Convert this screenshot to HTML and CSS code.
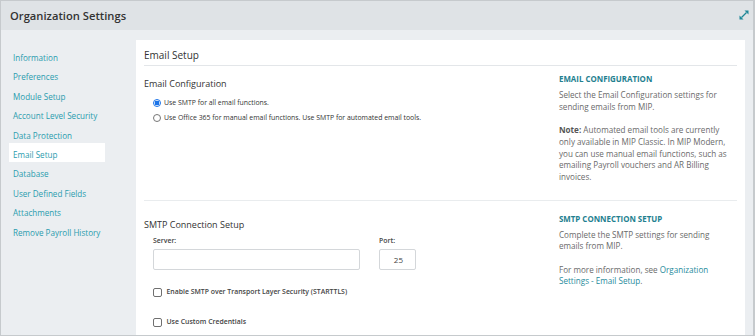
FILE: index.html
```html
<!DOCTYPE html>
<html lang="en">
<head>
    <meta charset="UTF-8">
    <meta name="viewport" content="width=device-width, initial-scale=1.0">
    <title>Organization Settings</title>
    <link rel="stylesheet" href="styles.css">
</head>
<body>
    <div class="panel">
        <div class="panel-header">
            <span class="panel-title">Organization Settings</span>
            <!-- Expand icon -->
            <svg class="expand-icon" width="10" height="10" viewBox="0 0 10 10">
                <line x1="2.5" y1="7.5" x2="7.5" y2="2.5" stroke="#1e8797" stroke-width="1.2"/>
                <polygon points="5.5,0.5 9.5,0.5 9.5,4.5" fill="#1e8797"/>
                <polygon points="0.5,5.5 0.5,9.5 4.5,9.5" fill="#1e8797"/>
            </svg>
        </div>

        <div class="panel-body">
            <ul class="side-nav">
                <li><a href="#">Information</a></li>
                <li><a href="#">Preferences</a></li>
                <li><a href="#">Module Setup</a></li>
                <li><a href="#">Account Level Security</a></li>
                <li><a href="#">Data Protection</a></li>
                <li class="active"><a href="#">Email Setup</a></li>
                <li><a href="#">Database</a></li>
                <li><a href="#">User Defined Fields</a></li>
                <li><a href="#">Attachments</a></li>
                <li><a href="#">Remove Payroll History</a></li>
            </ul>

            <div class="card">
                <div class="card-title">Email Setup</div>

                <div class="section section-config">
                    <div class="section-main">
                        <div class="section-heading">Email Configuration</div>
                        <label class="radio-row">
                            <span class="radio checked"></span>
                            Use SMTP for all email functions.
                        </label>
                        <label class="radio-row">
                            <span class="radio"></span>
                            Use Office 365 for manual email functions. Use SMTP for automated email tools.
                        </label>
                    </div>
                    <div class="section-help">
                        <div class="help-heading">EMAIL CONFIGURATION</div>
                        <p>Select the Email Configuration settings for sending emails from MIP.</p>
                        <p class="spaced"><strong>Note:</strong> Automated email tools are currently only available in MIP Classic. In MIP Modern, you can use manual email functions, such as emailing Payroll vouchers and AR Billing invoices.</p>
                    </div>
                </div>

                <div class="section section-smtp">
                    <div class="section-main">
                        <div class="section-heading">SMTP Connection Setup</div>
                        <div class="field-row">
                            <div class="field field-server">
                                <div class="field-label">Server:</div>
                                <div class="text-input"></div>
                            </div>
                            <div class="field field-port">
                                <div class="field-label">Port:</div>
                                <div class="text-input port-input">25</div>
                            </div>
                        </div>
                        <label class="check-row first">
                            <span class="checkbox"></span>
                            Enable SMTP over Transport Layer Security (STARTTLS)
                        </label>
                        <label class="check-row">
                            <span class="checkbox"></span>
                            Use Custom Credentials
                        </label>
                    </div>
                    <div class="section-help">
                        <div class="help-heading">SMTP CONNECTION SETUP</div>
                        <p>Complete the SMTP settings for sending emails from MIP.</p>
                        <p class="spaced">For more information, see <a href="#">Organization Settings - Email Setup</a>.</p>
                    </div>
                </div>
            </div>
        </div>
    </div>
</body>
</html>
```

FILE: styles.css
```css
* {
    box-sizing: border-box;
}

html, body {
    margin: 0;
    padding: 0;
}

body {
    font-family: 'Open Sans', 'Liberation Sans', sans-serif;
    background-color: #ffffff;
    color: #333;
}

.panel {
    width: 755px;
    height: 336px;
    border: 1px solid #c6cacd;
    border-right-width: 2px;
    overflow: hidden;
    background-color: #ebeef1;
}

.panel-header {
    height: 29px;
    background-color: #dfe3e6;
    display: flex;
    align-items: center;
    justify-content: space-between;
    padding: 0 4px 0 9px;
}

.panel-title {
    font-size: 11.2px;
    font-weight: 600;
    color: #333;
}

.expand-icon {
    margin-top: -1px;
}

.panel-body {
    display: flex;
    align-items: flex-start;
    padding: 10px 8px 0 0;
    height: 306px;
}

/* Left navigation */
.side-nav {
    list-style: none;
    margin: 0;
    padding: 6px 0 0 8px;
    width: 135px;
    flex-shrink: 0;
}

.side-nav li {
    width: 96px;
    height: 19.4px;
    line-height: 19.4px;
    padding-left: 4px;
}

.side-nav li.active {
    background-color: #ffffff;
}

.side-nav a {
    font-size: 8.1px;
    color: #2a9cae;
    text-decoration: none;
}

/* Main card */
.card {
    flex: 1;
    background-color: #ffffff;
    padding: 0 8px;
    min-height: 310px;
}

.card-title {
    font-size: 10px;
    line-height: 16px;
    padding: 7px 0 2px;
    border-bottom: 1px solid #e3e6e9;
    color: #333;
}

.section {
    display: grid;
    grid-template-columns: 415px 1fr;
}

.section-config {
    padding: 7px 0 17px;
    border-bottom: 1px solid #e9ecee;
}

.section-smtp {
    padding-top: 12px;
}

.section-heading {
    font-size: 9px;
    line-height: 14px;
    margin-top: 4px;
    color: #333;
}

.section-smtp .section-heading {
    margin-top: 5px;
}

.radio-row {
    display: flex;
    align-items: center;
    height: 15px;
    padding-left: 9px;
    font-size: 6.9px;
    color: #333;
}

.section-config .radio-row:first-of-type {
    margin-top: 4px;
}

.radio {
    width: 8px;
    height: 8px;
    border-radius: 50%;
    border: 1px solid #767676;
    margin-right: 3px;
    flex-shrink: 0;
}

.radio.checked {
    border-color: #1a73e8;
    background: radial-gradient(circle, #1a73e8 0 2.2px, #ffffff 2.6px);
}

/* Help column */
.section-help {
    max-width: 172px;
}

.help-heading {
    font-size: 7.9px;
    font-weight: 700;
    line-height: 12px;
    color: #23808f;
}

.section-help p {
    margin: 4px 0 0;
    font-size: 8.1px;
    line-height: 11.7px;
    color: #6a6a6a;
}

.section-help p.spaced {
    margin-top: 11.7px;
}

.section-help strong {
    color: #555;
}

.section-help a {
    color: #1f8b9c;
    text-decoration: none;
}

/* SMTP fields */
.field-row {
    display: flex;
    gap: 19px;
    padding-left: 9px;
    margin-top: 4px;
}

.field-label {
    font-size: 6.9px;
    font-weight: 600;
    line-height: 10px;
    color: #444;
    margin-bottom: 3px;
}

.field-server {
    width: 207px;
}

.field-port {
    width: 37px;
}

.text-input {
    height: 21px;
    border: 1px solid #d4d7da;
    border-radius: 2px;
    font-size: 8px;
    color: #444;
    line-height: 19px;
}

.port-input {
    text-align: right;
    padding-right: 12px;
}

.check-row {
    display: flex;
    align-items: center;
    height: 12px;
    padding-left: 9px;
    margin-top: 18px;
    font-size: 6.9px;
    font-weight: 600;
    color: #444;
}

.check-row.first {
    margin-top: 16px;
}

.checkbox {
    width: 8.5px;
    height: 8.5px;
    border: 1px solid #6f6f6f;
    border-radius: 2px;
    margin: 2px 5px 0 0;
    flex-shrink: 0;
}
```
